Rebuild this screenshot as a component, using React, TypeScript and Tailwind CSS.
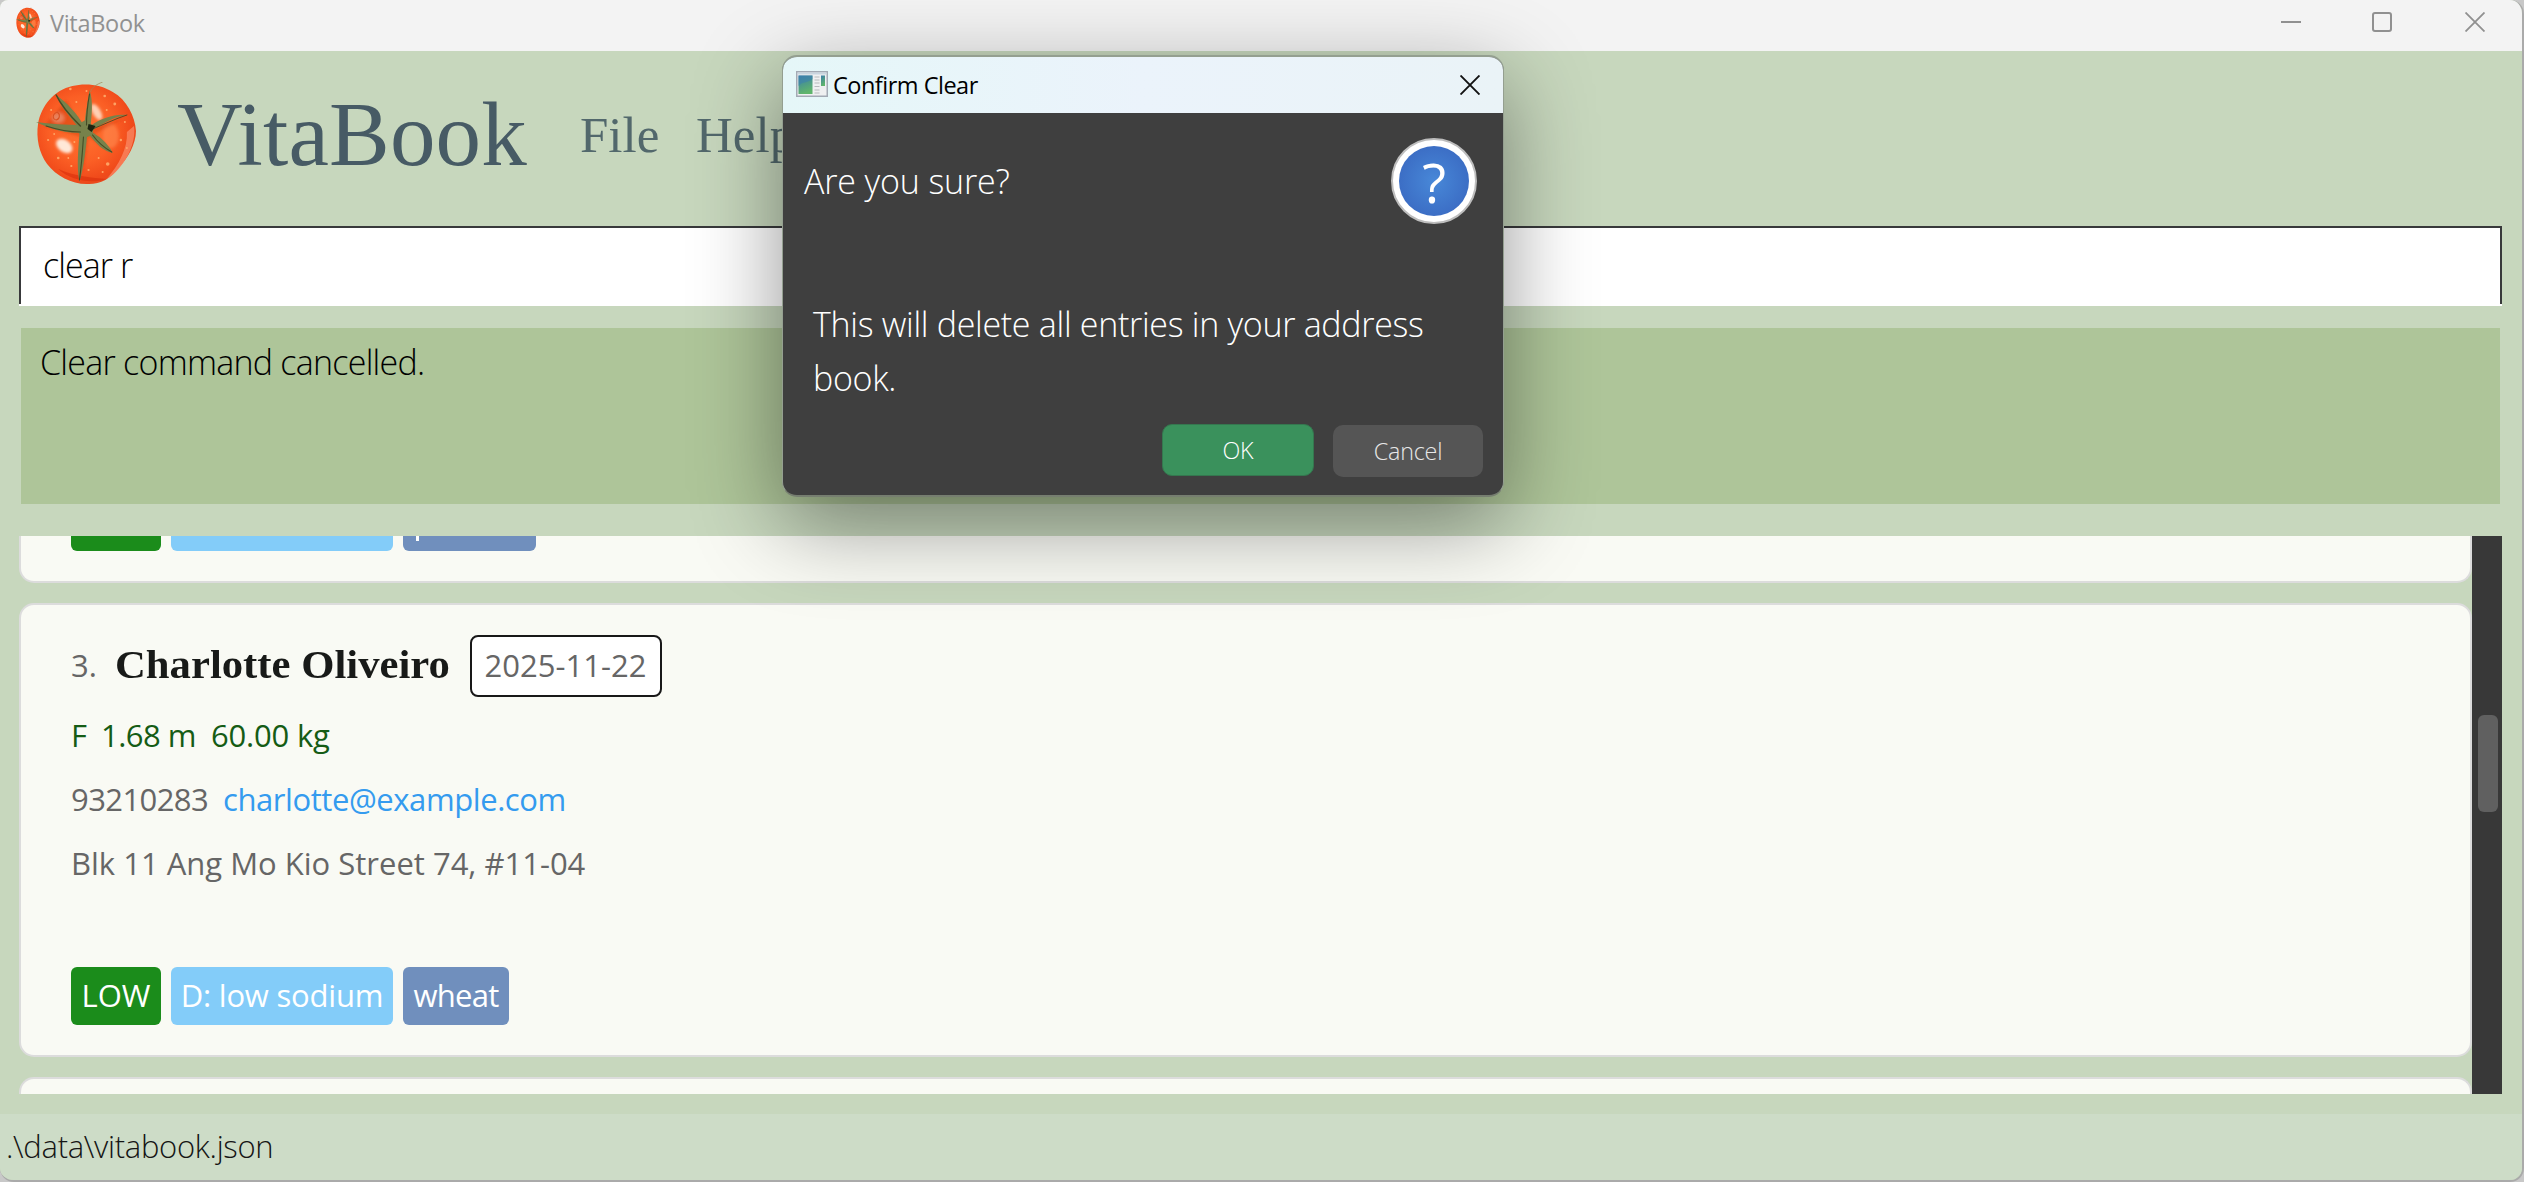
import React from "react";

type Person = {
  index: number;
  name: string;
  date: string;
  sex: string;
  height: string;
  weight: string;
  phone: string;
  email: string;
  address: string;
  diet: string;
  allergy: string;
};

const person: Person = {
  index: 3,
  name: "Charlotte Oliveiro",
  date: "2025-11-22",
  sex: "F",
  height: "1.68 m",
  weight: "60.00 kg",
  phone: "93210283",
  email: "charlotte@example.com",
  address: "Blk 11 Ang Mo Kio Street 74, #11-04",
  diet: "D: low sodium",
  allergy: "wheat",
};

function Tomato({ className, id }: { className: string; id: string }) {
  return (
    <svg viewBox="0 0 100 103" preserveAspectRatio="none" className={className}>
      <defs>
        <radialGradient id={id} cx="0.45" cy="0.45" r="0.6">
          <stop offset="0" stopColor="#ff7430" />
          <stop offset="0.55" stopColor="#fb5f25" />
          <stop offset="0.85" stopColor="#f04a1a" />
          <stop offset="1" stopColor="#e54a22" />
        </radialGradient>
        <filter id={id + "-soft"} x="-50%" y="-50%" width="200%" height="200%">
          <feGaussianBlur stdDeviation="1.7" />
        </filter>
      </defs>
      <path d="M36 4 C48 1 64 2 76 10 C90 18 98 34 99 49 C99 62 91 76 82 86 C74 97 62 103 50 102 C35 102 20 94 11 82 C3 71 0 56 2 42 C5 24 18 8 36 4Z" fill={`url(#${id})`} />
      <path d="M97 44 C100 62 86 88 70 97 C82 83 91 66 90 50Z" fill="#f98a66" opacity="0.75" />
      <path d="M22 87 C35 99 55 102 70 97 C56 96 38 94 22 87Z" fill="#d92f0c" opacity="0.6" />
      <g filter={`url(#${id}-soft)`}>
        <ellipse cx="22" cy="36" rx="6" ry="5" fill="#ffc0a0" opacity="0.9" />
        <ellipse cx="28" cy="64" rx="9" ry="6" transform="rotate(35 28 64)" fill="#ffe8d8" />
        <ellipse cx="60" cy="30" rx="4" ry="9" transform="rotate(-30 60 30)" fill="#ffd0b4" />
        <ellipse cx="74" cy="54" rx="8" ry="12" fill="#ff8a50" opacity="0.6" />
        <path d="M30 18 Q38 35 47 44 L58 45 L88 36 L58 52 L74 70 L52 55 L46 92 L44 55 L8 44Z" fill="#c2330c" opacity="0.4" />
      </g>
      <g fill="#ffb070" opacity="0.85">
        <circle cx="34" cy="7" r="1.3" /><circle cx="50" cy="9" r="1" /><circle cx="68" cy="14" r="1.3" />
        <circle cx="78" cy="22" r="1.4" /><circle cx="88" cy="40" r="1" /><circle cx="84" cy="58" r="1.2" />
        <circle cx="71" cy="82" r="1.8" /><circle cx="62" cy="76" r="1" /><circle cx="52" cy="88" r="1.1" />
        <circle cx="35" cy="84" r="1.1" /><circle cx="22" cy="76" r="1.3" /><circle cx="12" cy="58" r="1.1" />
        <circle cx="32" cy="76" r="0.9" /><circle cx="38" cy="60" r="1" /><circle cx="18" cy="52" r="0.9" />
        <circle cx="40" cy="20" r="1" /><circle cx="70" cy="28" r="1" /><circle cx="15" cy="28" r="1" />
        <circle cx="90" cy="66" r="0.9" /><circle cx="66" cy="90" r="1" />
      </g>
      <path d="M21 30 C24 32 24 37 20 38 C16 37 16 32 21 30Z" fill="none" stroke="#d95020" strokeWidth="1" />
      <g fill="#77824b">
        <path d="M20 13 C31 21 41 32 47 43 L42 46 C35 35 26 28 20 13Z" />
        <path d="M53 8 C57 20 55 33 54 45 L48 43 C49 31 51 21 53 8Z" />
        <path d="M90 33 C79 34 67 41 56 48 L54 44 C65 36 77 32 90 33Z" />
        <path d="M0 40 C14 42 29 43 45 43 L45 51 C30 51 16 48 0 40Z" />
        <path d="M43 52 L51 52 C49 67 48 83 43 100 C40 84 42 67 43 52Z" />
        <path d="M54 50 C62 53 71 61 76 71 C66 69 60 62 53 53Z" />
        <path d="M42 42 L49 38 L57 44 L56 53 L48 56 L42 51Z" />
      </g>
      <g fill="none" stroke="#454c26" strokeWidth="1.1" strokeLinecap="round">
        <path d="M20 13 C25 24 37 37 44 44" strokeWidth="1.5" />
        <path d="M53 12 C51 23 50 33 50 43" />
        <path d="M90 33 C78 37 66 43 56 47" strokeWidth="0.9" />
        <path d="M10 44 C22 48 34 50 44 50" />
        <path d="M47 55 C46 70 45 84 43 98" />
        <path d="M56 53 C61 60 68 66 75 70" />
      </g>
      <path d="M52 42 L59 44 L55 50 L51 47Z" fill="#1d2410" />
      <path d="M54 10 C55 5 61 2 66 0" fill="none" stroke="#a08a5a" strokeWidth="0.7" />
    </svg>
  );
}

function TitleBar() {
  return (
    <div className="flex h-[51px] shrink-0 items-center bg-[#f3f3f3] pb-[7px] pl-4 pr-[37px]">
      <Tomato id="tomato-small" className="h-[31px] w-6" />
      <span className="ml-2.5 mt-0.5 text-[23.5px] leading-8 tracking-[-0.3px] text-[#919191]">VitaBook</span>
      <div className="ml-auto flex items-center text-[#909090]">
        <svg className="size-5" viewBox="0 0 20 20"><path d="M0 10H20" stroke="currentColor" strokeWidth="2" /></svg>
        <svg className="ml-[71px] size-5" viewBox="0 0 20 20"><rect x="1" y="1" width="18" height="18" rx="2" fill="none" stroke="currentColor" strokeWidth="2" /></svg>
        <svg className="ml-[73px] size-5" viewBox="0 0 20 20"><path d="M.5.5L19.5 19.5M19.5.5L.5 19.5" stroke="currentColor" strokeWidth="1.8" /></svg>
      </div>
    </div>
  );
}

function Header() {
  return (
    <header className="mb-2.5 flex h-[165px] shrink-0 items-center pl-9 font-['Liberation_Serif',serif]">
      <Tomato id="tomato-large" className="h-[103px] w-[101px]" />
      <h1 className="ml-10 mt-0.5 w-[403px] whitespace-nowrap text-[91px] leading-none tracking-[0.2px] text-[#475b65]">VitaBook</h1>
      <nav className="mt-[3px] flex text-[51px] leading-none text-[#52686c]">
        <span className="w-[116px]">File</span>
        <span>Help</span>
      </nav>
    </header>
  );
}

function Card({ className, children }: { className: string; children?: React.ReactNode }) {
  return (
    <article className={`flex shrink-0 flex-col border-[#dcdcdc] bg-[#f9faf4] pl-[50px] text-[31px] text-[#666666] ${className}`}>
      {children}
    </article>
  );
}

function ConfirmDialog() {
  return (
    <div
      role="dialog"
      className="absolute left-[782px] top-[55px] flex h-[442px] w-[722px] flex-col overflow-hidden rounded-[15px] border-x border-y-2 border-[#949f90] border-b-[#767e70] bg-[#3f3f3f] text-white shadow-[0_26px_88px_rgba(0,0,0,0.42)]"
    >
      <div className="flex h-[56px] shrink-0 items-center bg-linear-to-r from-[#e5f7f8] via-[#ebf3fb] to-[#eaf3f7] pb-px pl-[13px] pr-[23px] text-black">
        <svg className="h-[27px] w-8" viewBox="0 0 32 27">
          <defs>
            <linearGradient id="pane" x1="0" y1="0" x2="0.3" y2="1">
              <stop offset="0" stopColor="#3a7da8" /><stop offset="1" stopColor="#5fb56c" />
            </linearGradient>
          </defs>
          <rect x="0.75" y="0.75" width="30.5" height="24.5" fill="#eff0f1" stroke="#a3aab4" strokeWidth="1.5" />
          <path d="M1.5 1.5H30.5V3.5H1.5Z" fill="#c9d5df" />
          <path d="M2.5 4.5H16.5V23H2.5Z" fill="url(#pane)" />
          <path d="M2.5 15C7 10 12 12 16.5 8V4.5H2.5Z" fill="#3d82ad" opacity=".6" />
          <path d="M25 4.5H29V15H25Z" fill="url(#pane)" />
          <path d="M18.5 6H23.5M18.5 9H23.5M18.5 12H23.5M18.5 15.5H23.5M18.5 19H23.5M18.5 22H23.5" stroke="#b7b9bc" strokeWidth="1.2" />
        </svg>
        <span className="ml-[5px] mt-0.5 text-[23.5px] leading-none tracking-[-0.5px]">Confirm Clear</span>
        <svg className="ml-auto size-5" viewBox="0 0 20 20"><path d="M.5.5L19.5 19.5M19.5.5L.5 19.5" stroke="#111" strokeWidth="1.9" /></svg>
      </div>
      <div className="flex h-[136px] shrink-0 items-center justify-between pl-[21px] pr-[26px] text-[34px] font-light">
        <span className="tracking-[-0.15px]">Are you sure?</span>
        <span className="flex size-[86px] items-center justify-center rounded-full border-2 border-[#bdbdbd] bg-white">
          <span className="flex size-[70px] items-center justify-center rounded-full bg-radial from-[#4888d8] to-[#3763bd] text-[55px] font-normal leading-none">?</span>
        </span>
      </div>
      <p className="mt-[48px] pl-[30px] text-[34px] font-light leading-[54px] tracking-[-0.3px]">
        This will delete all entries in your address
        <br />
        book.
      </p>
      <div className="mt-[19px] flex gap-[19px] pl-[379px] text-[23.3px] font-light tracking-[-0.2px]">
        <button className="flex h-[52px] w-[152px] items-center justify-center rounded-[10px] border border-[#35774f] bg-[#3a915c]">OK</button>
        <button className="flex h-[52px] w-[150px] translate-y-px items-center justify-center rounded-[10px] bg-[#555555] text-[#e8e8e8]">Cancel</button>
      </div>
    </div>
  );
}

export default function App() {
  return (
    <div className="relative h-[1182px] w-[2524px] overflow-hidden bg-[#c8c8c8] font-['Open_Sans','Noto_Sans',sans-serif]">
      <main className="flex h-[1182px] w-[2524px] flex-col overflow-hidden rounded-[14px] rounded-tl-[8px] border-b-2 border-r-2 border-[#aaaaaa] bg-[#c7d7bd]">
        <TitleBar />
        <Header />
        <div className="ml-[19px] h-20 w-[2483px] shrink-0 bg-white">
          <div className="flex h-[78px] items-center border-x-2 border-t-2 border-[#38393b] pb-px pl-[22px] text-[34px] font-light tracking-[-0.95px] text-black">
            clear r
          </div>
        </div>
        <div className="ml-[21px] mt-[22px] h-44 w-[2479px] shrink-0 bg-[#aec599] pl-[19px] pt-[12px] text-[34px] font-light leading-[44px] tracking-[-0.75px] text-black">
          Clear command cancelled.
        </div>
        <div className="ml-[19px] mt-8 flex h-[558px] w-[2483px] shrink-0 overflow-hidden">
          <div className="flex w-[2453px] flex-col gap-5">
            <Card className="h-[47px] rounded-b-[15px] border-x-2 border-b-2">
              <div className="flex h-[15px] items-end gap-2.5 overflow-hidden text-white">
                <span className="h-[15px] w-[90px] rounded-b-md bg-[#1b8c1b]" />
                <span className="h-[15px] w-[222px] rounded-b-md bg-[#83ccf9]" />
                <span className="h-[15px] w-[133px] rounded-b-md bg-[#708fbd] pl-[13px]">
                  <i className="block h-[5px] w-[3px] bg-white" />
                </span>
              </div>
            </Card>
            <Card className="h-[454px] rounded-[15px] border-2 pt-[30px]">
              <div className="flex h-[62px] items-center">
                <span className="mt-[-2px] w-[44px]">{person.index}.</span>
                <div className="w-[355px]">
                  <span className="inline-block origin-left scale-x-[1.095] whitespace-nowrap font-['Liberation_Serif',serif] text-[39px] font-bold leading-none text-[#181a18]">{person.name}</span>
                </div>
                <span className="flex h-[62px] w-[192px] items-center justify-center rounded-lg border-2 border-[#181818] bg-white pb-0.5 pr-px">{person.date}</span>
              </div>
              <div className="mt-[6px] flex h-16 items-center text-[#155c15]">
                <span className="w-[30px]">{person.sex}</span>
                <span className="w-[110px] tracking-[-0.5px]">{person.height}</span>
                <span className="tracking-[-0.2px]">{person.weight}</span>
              </div>
              <div className="flex h-16 items-center">
                <span className="w-[152px] tracking-[-0.6px]">{person.phone}</span>
                <span className="tracking-[-0.42px] text-[#349bef]">{person.email}</span>
              </div>
              <div className="flex h-16 items-center">{person.address}</div>
              <div className="mt-[72px] flex h-[58px] gap-2.5 pb-0 text-white">
                <span className="flex w-[90px] items-center justify-center rounded-md bg-[#1b8c1b] pb-px">LOW</span>
                <span className="flex w-[222px] items-center justify-center rounded-md bg-[#83ccf9] pb-px tracking-[-0.2px]">{person.diet}</span>
                <span className="flex w-[106px] items-center justify-center rounded-md bg-[#708fbd] pb-px tracking-[-0.7px]">{person.allergy}</span>
              </div>
            </Card>
            <Card className="h-[17px] rounded-t-[15px] border-x-2 border-t-2" />
          </div>
          <div className="flex w-[30px] justify-end bg-[#383838] pr-1 pt-[179px]">
            <div className="h-[97px] w-5 rounded-[6px] bg-[#606060]" />
          </div>
        </div>
        <footer className="mt-5 flex h-[66px] shrink-0 items-center bg-[#cddcc7] pb-px pl-[6px] text-[31px] font-light tracking-[-0.3px] text-[#151515]">
          .\data\vitabook.json
        </footer>
      </main>
      <ConfirmDialog />
    </div>
  );
}
